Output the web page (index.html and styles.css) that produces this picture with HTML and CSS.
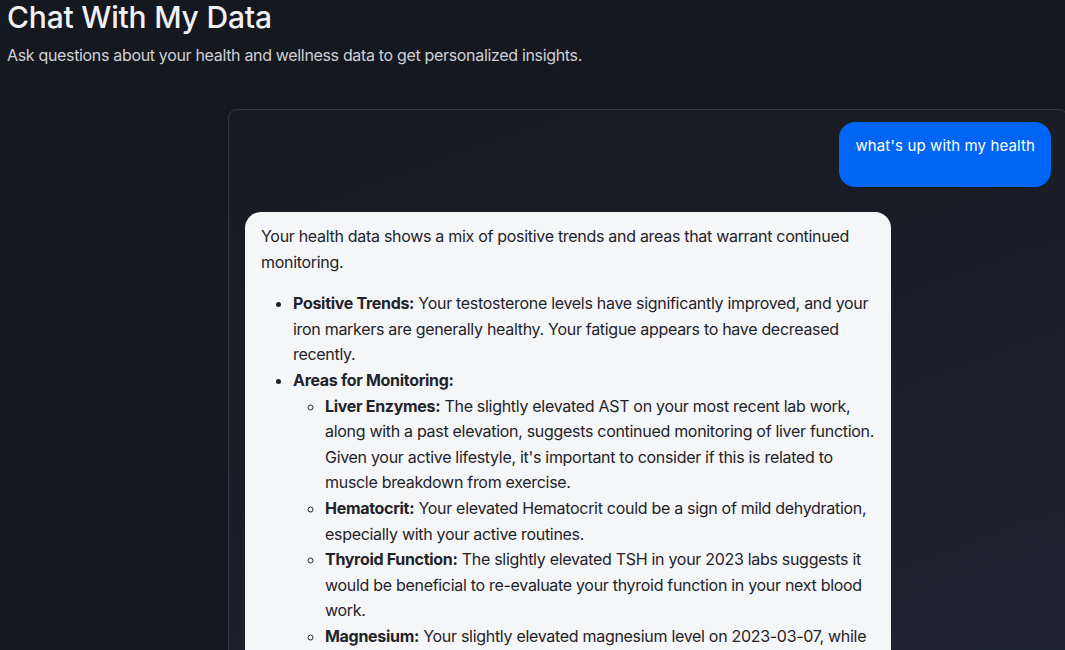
FILE: index.html
```html
<!DOCTYPE html>
<html lang="en">
<head>
<meta charset="utf-8">
<title>Chat With My Data</title>
<link rel="stylesheet" href="styles.css">
</head>
<body>
<header class="page-header">
  <h1 class="title">Chat With My Data</h1>
  <p class="subtitle">Ask questions about your health and wellness data to get personalized insights.</p>
</header>
<main class="chat">
  <div class="msg-row user-row">
    <div class="bubble user"><p>what's up with my health</p></div>
  </div>
  <div class="msg-row bot-row">
    <div class="bubble bot">
      <p>Your health data shows a mix of positive trends and areas that warrant continued monitoring.</p>
      <ul>
        <li><strong>Positive Trends:</strong> Your testosterone levels have significantly improved, and your iron markers are generally healthy. Your fatigue appears to have decreased recently.</li>
        <li><strong>Areas for Monitoring:</strong>
          <ul>
            <li><strong>Liver Enzymes:</strong> The slightly elevated AST on your most recent lab work, along with a past elevation, suggests continued monitoring of liver function. Given your active lifestyle, it's important to consider if this is related to muscle breakdown from exercise.</li>
            <li><strong>Hematocrit:</strong> Your elevated Hematocrit could be a sign of mild dehydration, especially with your active routines.</li>
            <li><strong>Thyroid Function:</strong> The slightly elevated TSH in your 2023 labs suggests it would be beneficial to re-evaluate your thyroid function in your next blood work.</li>
            <li><strong>Magnesium:</strong> Your slightly elevated magnesium level on 2023-03-07, while within a range that is generally not a concern, may be worth checking again.</li>
          </ul>
        </li>
      </ul>
    </div>
  </div>
</main>
</body>
</html>
```

FILE: styles.css
```css
html, body {
  margin: 0;
  padding: 0;
  height: 100%;
  overflow: hidden;
}
body {
  background: #161820;
  font-family: Inter, "Noto Sans", "Liberation Sans", sans-serif;
  color: #e6e7eb;
}
.page-header {
  padding: 0 7px;
}
.title {
  margin: 0;
  font-size: 30px;
  line-height: 34px;
  font-weight: 500;
  color: #f1f1f3;
  letter-spacing: -0.2px;
}
.subtitle {
  margin: 9px 0 0;
  font-size: 16px;
  line-height: 24px;
  color: #cfd0d6;
  letter-spacing: -0.33px;
}
.chat {
  margin: 42px 0 0 228px;
  width: 806px;
  min-height: 600px;
  border: 1px solid #353843;
  border-radius: 9px;
  background: linear-gradient(160deg, #191a21 0%, #1b1d26 45%, #202331 100%);
  padding: 12px 16px;
  box-sizing: content-box;
}
.msg-row {
  display: flex;
}
.user-row {
  justify-content: flex-end;
}
.bot-row {
  justify-content: flex-start;
  margin-top: 25px;
}
.bubble {
  border-radius: 16px;
}
.bubble p {
  margin: 0;
}
.user {
  background: #0064f4;
  color: #ffffff;
  padding: 12px 16px 13px;
  font-size: 15px;
  line-height: 24px;
  letter-spacing: 0.12px;
}
.user p {
  margin-bottom: 16px;
}
.bot {
  width: 614px;
  background: #f5f6f8;
  color: #1f2329;
  padding: 12px 16px 11px;
  font-size: 16px;
  line-height: 25.6px;
  letter-spacing: -0.3px;
}
.bot > p {
  margin-bottom: 16px;
}
.bot ul {
  margin: 0;
  padding-left: 32px;
  list-style: disc;
}
.bot ul ul {
  list-style: circle;
}
.bot strong {
  font-weight: 700;
}
```
